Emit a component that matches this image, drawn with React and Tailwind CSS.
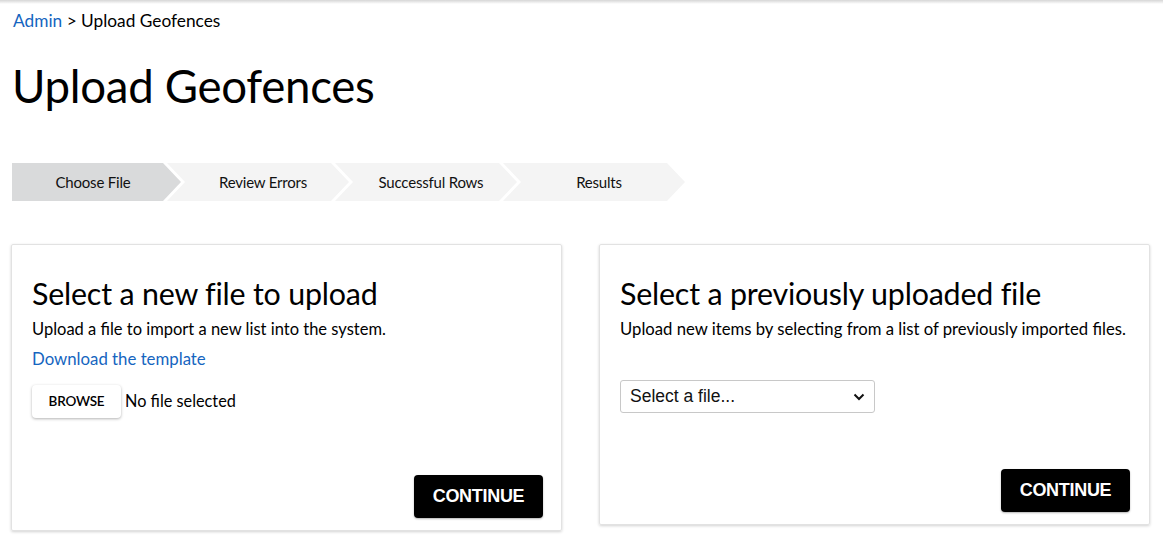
import React from "react";

const steps = ["Choose File", "Review Errors", "Successful Rows", "Results"];

function Stepper() {
  return (
    <div className="flex h-[38px] ml-[12px]">
      {steps.map((s, i) => {
        const first = i === 0;
        return (
          <div
            key={s}
            className={
              first
                ? "h-full w-[169px] bg-[#d9dadb] flex items-center justify-center pr-[7px] [clip-path:polygon(0_0,151px_0,100%_50%,151px_100%,0_100%)]"
                : "h-full w-[182px] -ml-[14px] bg-[#f4f4f4] flex items-center justify-center pl-[10px] [clip-path:polygon(0_0,164px_0,100%_50%,164px_100%,0_100%,18px_50%)]"
            }
          >
            <span className="text-[15px] text-[#111] font-['Lato',sans-serif] tracking-[-0.2px]">{s}</span>
          </div>
        );
      })}
    </div>
  );
}

function ContinueBtn() {
  return (
    <button className="w-[129px] h-[43px] bg-black text-white rounded-[4px] font-['Liberation_Sans',Arial,sans-serif] font-bold text-[18px] tracking-[-0.3px] shadow-[0_1px_2px_rgba(0,0,0,0.3)]">
      CONTINUE
    </button>
  );
}

export default function App() {
  return (
    <div className="w-[1163px] h-[543px] bg-white overflow-hidden relative font-['Lato',sans-serif] text-black">
      <div className="absolute top-0 left-0 right-0 h-[4px] bg-gradient-to-b from-[#d6d6d6] to-white" />
      <div className="pt-[10px] pl-[13px] text-[17.3px] leading-[22px]">
        <span className="text-[#1565c0]">Admin</span>
        <span> &gt; Upload Geofences</span>
      </div>
      <h1 className="pl-[12px] mt-[28px] text-[45.6px] leading-[52px] tracking-[-0.3px]">Upload Geofences</h1>
      <div className="mt-[51px]">
        <Stepper />
      </div>
      <div className="flex items-start gap-[37px] pl-[11px] pr-[13px] mt-[43px]">
        <div className="w-[551px] h-[287px] border border-[#e2e2e2] rounded-[2px] shadow-[0_1px_3px_rgba(0,0,0,0.18)] flex flex-col pl-[20px] pr-[18px] pt-[30px] pb-[12px]">
          <h2 className="text-[30.4px] leading-[36px] tracking-[-0.2px]">Select a new file to upload</h2>
          <p className="text-[16.5px] leading-[22px] mt-[7px]">Upload a file to import a new list into the system.</p>
          <a className="text-[16.8px] leading-[22px] mt-[8px] text-[#1565c0]">Download the template</a>
          <div className="flex items-center mt-[15px]">
            <button className="w-[89px] h-[33px] bg-white rounded-[4px] shadow-[0_1px_3px_rgba(0,0,0,0.3)] text-[13.5px] font-semibold tracking-[-0.2px]">
              BROWSE
            </button>
            <span className="ml-[4px] text-[16.3px]">No file selected</span>
          </div>
          <div className="mt-auto flex justify-end">
            <ContinueBtn />
          </div>
        </div>
        <div className="w-[551px] h-[281px] border border-[#e2e2e2] rounded-[2px] shadow-[0_1px_3px_rgba(0,0,0,0.18)] flex flex-col pl-[20px] pr-[19px] pt-[30px] pb-[12px]">
          <h2 className="text-[30.4px] leading-[36px] tracking-[-0.2px]">Select a previously uploaded file</h2>
          <p className="text-[16.7px] leading-[22px] mt-[7px]">Upload new items by selecting from a list of previously imported files.</p>
          <div className="mt-[40px] w-[255px] h-[33px] border border-[#c8c8c8] rounded-[3px] flex items-center justify-between pl-[9px] pr-[9px] font-['Liberation_Sans',Arial,sans-serif] text-[17.5px] text-[#111]">
            <span>Select a file...</span>
            <svg width="12" height="8" viewBox="0 0 12 8"><path d="M1.5 1.5 L6 6 L10.5 1.5" fill="none" stroke="#111" strokeWidth="2" /></svg>
          </div>
          <div className="mt-auto flex justify-end">
            <ContinueBtn />
          </div>
        </div>
      </div>
    </div>
  );
}
